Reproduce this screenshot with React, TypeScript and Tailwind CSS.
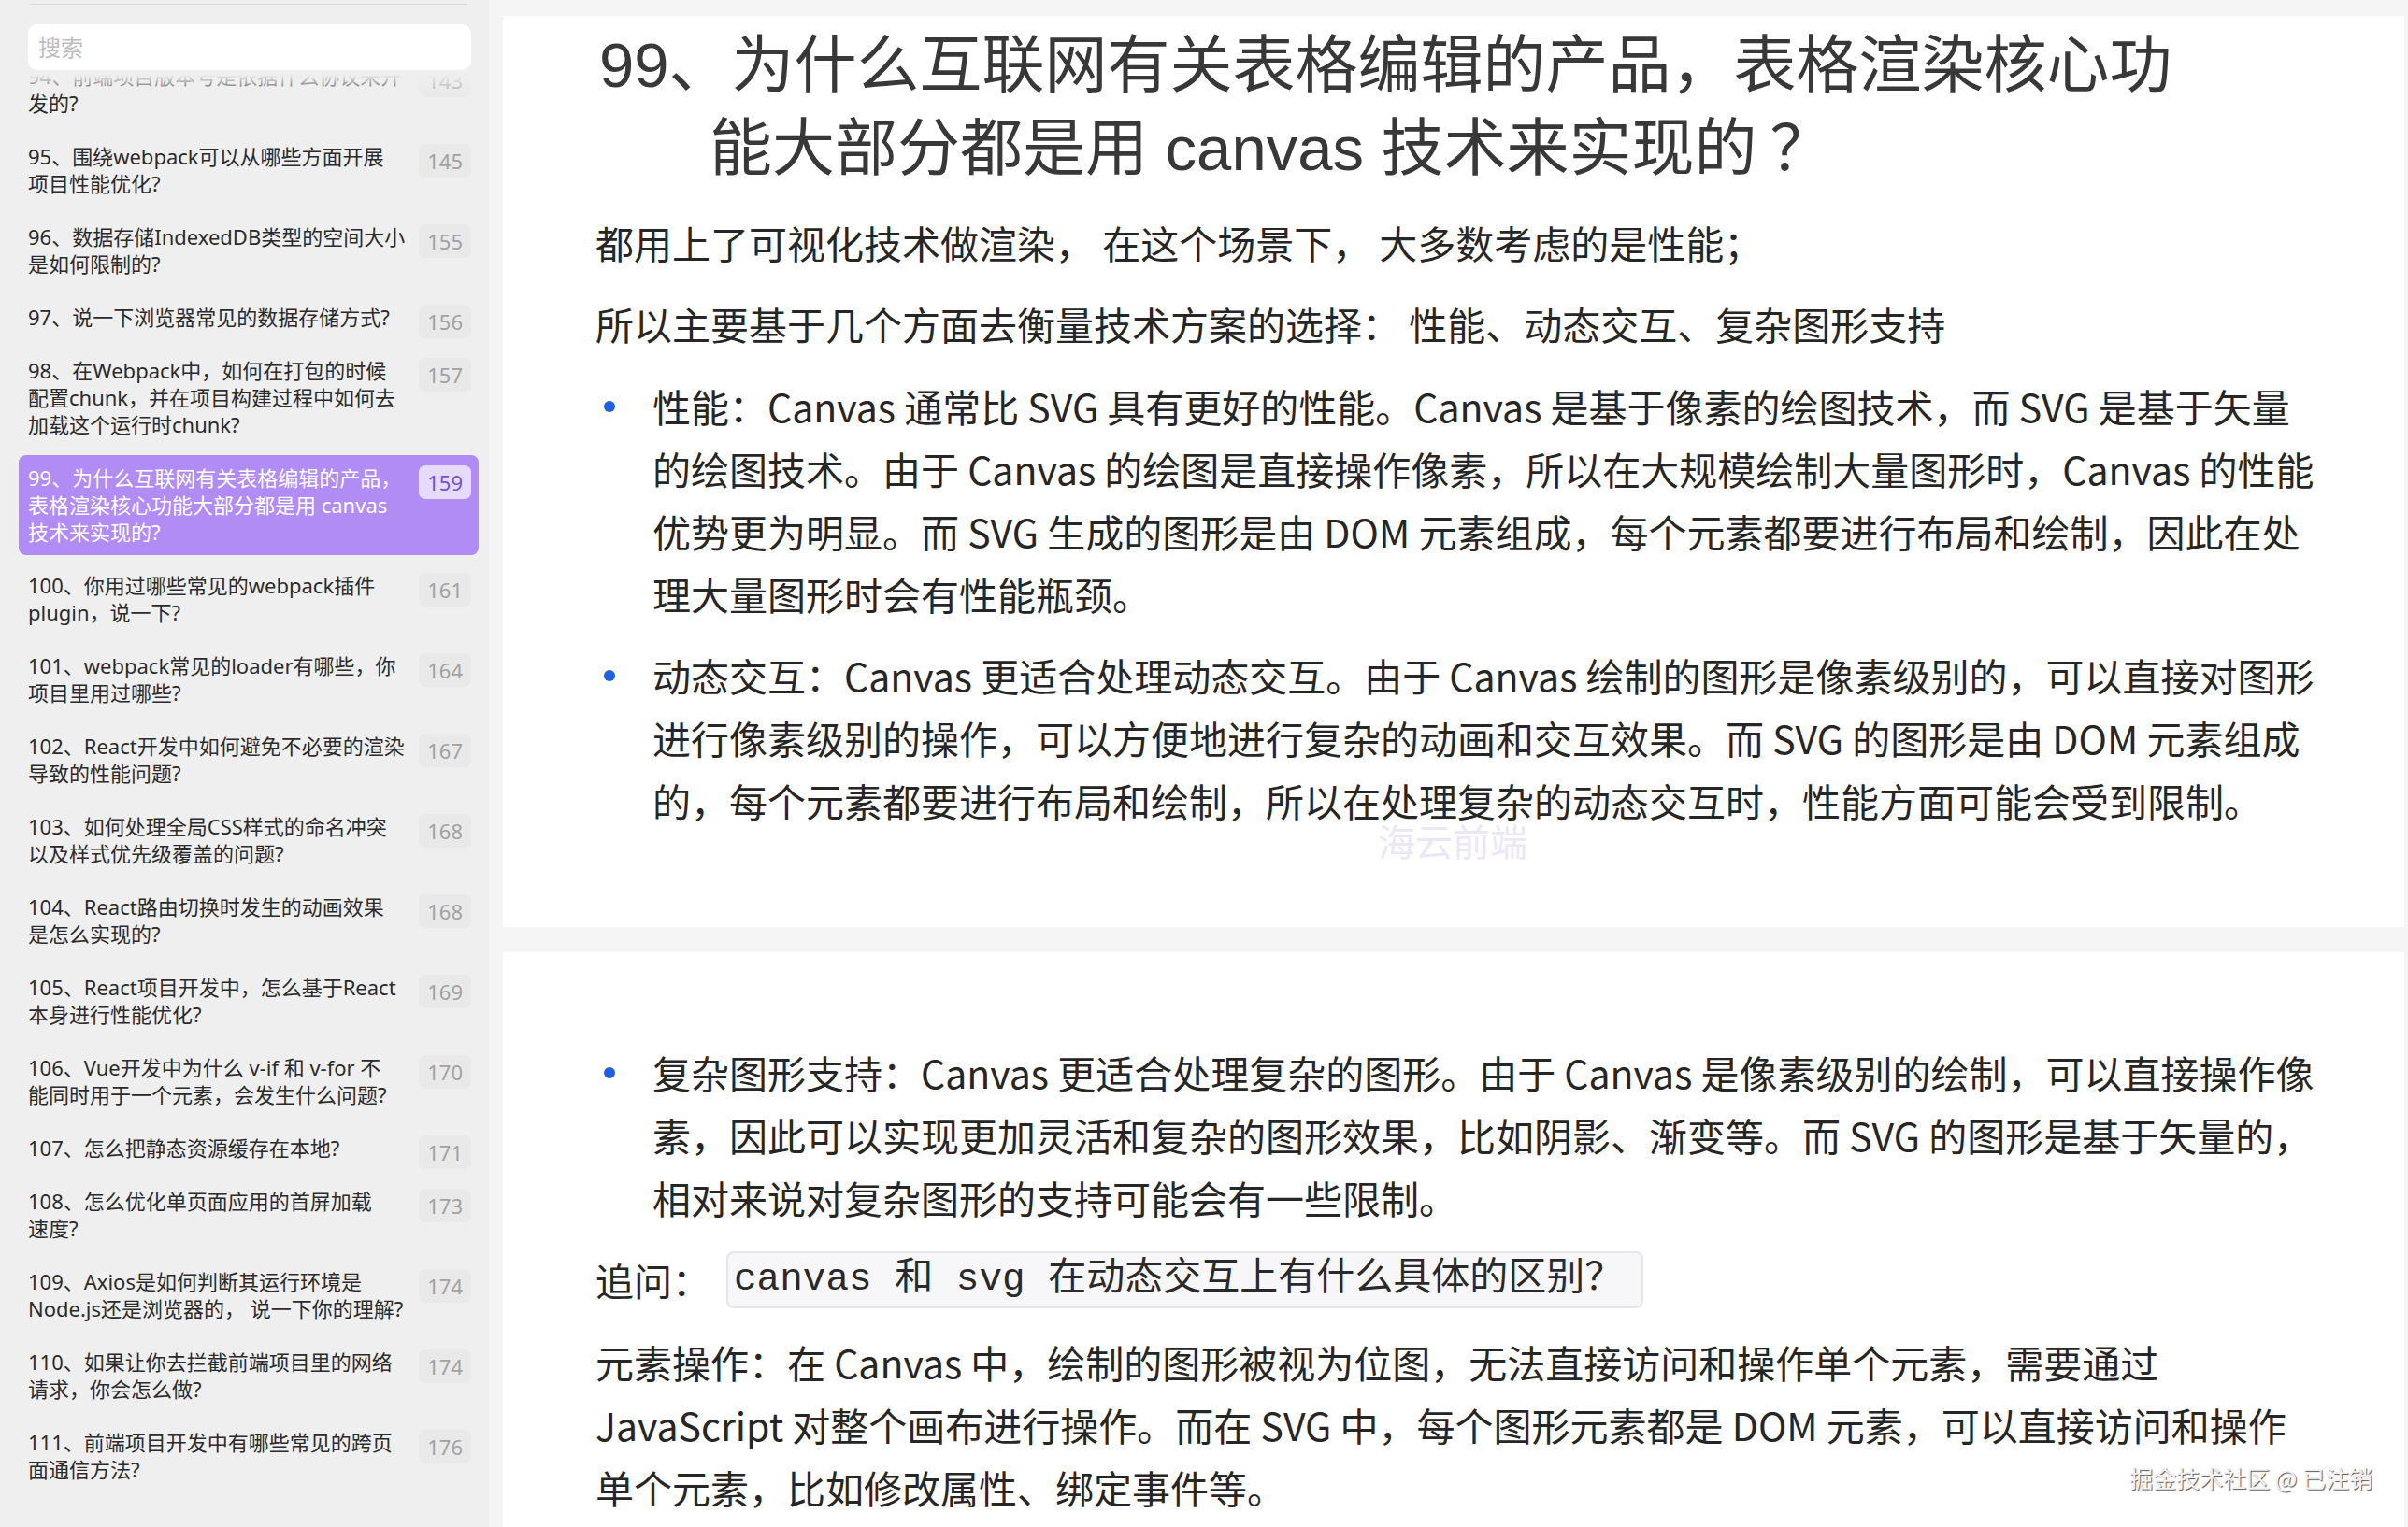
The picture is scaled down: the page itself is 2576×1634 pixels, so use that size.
import React from "react";

type Item = { lines: string[]; page: number; active?: boolean };

// table of contents, each entry broken into the lines it shows
const items: Item[] = [
  { lines: ["94、前端项目版本号是依据什么协议来开", "发的?"], page: 143 },
  { lines: ["95、围绕webpack可以从哪些方面开展", "项目性能优化?"], page: 145 },
  { lines: ["96、数据存储IndexedDB类型的空间大小", "是如何限制的?"], page: 155 },
  { lines: ["97、说一下浏览器常见的数据存储方式?"], page: 156 },
  {
    lines: ["98、在Webpack中，如何在打包的时候", "配置chunk，并在项目构建过程中如何去", "加载这个运行时chunk?"],
    page: 157,
  },
  {
    lines: ["99、为什么互联网有关表格编辑的产品，", "表格渲染核心功能大部分都是用 canvas", "技术来实现的?"],
    page: 159,
    active: true,
  },
  { lines: ["100、你用过哪些常见的webpack插件", "plugin，说一下?"], page: 161 },
  { lines: ["101、webpack常见的loader有哪些，你", "项目里用过哪些?"], page: 164 },
  { lines: ["102、React开发中如何避免不必要的渲染", "导致的性能问题?"], page: 167 },
  { lines: ["103、如何处理全局CSS样式的命名冲突", "以及样式优先级覆盖的问题?"], page: 168 },
  { lines: ["104、React路由切换时发生的动画效果", "是怎么实现的?"], page: 168 },
  { lines: ["105、React项目开发中，怎么基于React", "本身进行性能优化?"], page: 169 },
  { lines: ["106、Vue开发中为什么 v-if 和 v-for 不", "能同时用于一个元素，会发生什么问题?"], page: 170 },
  { lines: ["107、怎么把静态资源缓存在本地?"], page: 171 },
  { lines: ["108、怎么优化单页面应用的首屏加载", "速度?"], page: 173 },
  { lines: ["109、Axios是如何判断其运行环境是", "Node.js还是浏览器的， 说一下你的理解?"], page: 174 },
  { lines: ["110、如果让你去拦截前端项目里的网络", "请求，你会怎么做?"], page: 174 },
  { lines: ["111、前端项目开发中有哪些常见的跨页", "面通信方法?"], page: 176 },
];

const bullets1 = [
  [
    "性能：Canvas 通常比 SVG 具有更好的性能。Canvas 是基于像素的绘图技术，而 SVG 是基于矢量",
    "的绘图技术。由于 Canvas 的绘图是直接操作像素，所以在大规模绘制大量图形时，Canvas 的性能",
    "优势更为明显。而 SVG 生成的图形是由 DOM 元素组成，每个元素都要进行布局和绘制，因此在处",
    "理大量图形时会有性能瓶颈。",
  ],
  [
    "动态交互：Canvas 更适合处理动态交互。由于 Canvas 绘制的图形是像素级别的，可以直接对图形",
    "进行像素级别的操作，可以方便地进行复杂的动画和交互效果。而 SVG 的图形是由 DOM 元素组成",
    "的，每个元素都要进行布局和绘制，所以在处理复杂的动态交互时，性能方面可能会受到限制。",
  ],
];

const bullet3 = [
  "复杂图形支持：Canvas 更适合处理复杂的图形。由于 Canvas 是像素级别的绘制，可以直接操作像",
  "素，因此可以实现更加灵活和复杂的图形效果，比如阴影、渐变等。而 SVG 的图形是基于矢量的，",
  "相对来说对复杂图形的支持可能会有一些限制。",
];

const elementOps = [
  "元素操作：在 Canvas 中，绘制的图形被视为位图，无法直接访问和操作单个元素，需要通过",
  "JavaScript 对整个画布进行操作。而在 SVG 中，每个图形元素都是 DOM 元素，可以直接访问和操作",
  "单个元素，比如修改属性、绑定事件等。",
];

function Lines({ lines }: { lines: string[] }) {
  return (
    <>
      {lines.map((l, i) => (
        <div key={i}>{l}</div>
      ))}
    </>
  );
}

function Bullet({ lines }: { lines: string[] }) {
  return (
    <li className="flex">
      <div className="w-[61px] shrink-0">
        <div className="ml-[9px] mt-[28px] h-[12px] w-[12px] rounded-full bg-[#1f5fe6]" />
      </div>
      <div className="whitespace-nowrap">
        <Lines lines={lines} />
      </div>
    </li>
  );
}

function Sidebar() {
  return (
    <aside className="flex w-[523px] shrink-0 flex-col bg-[#efefef] font-['Noto_Sans','Noto_Sans_CJK_SC',sans-serif]">
      <div className="ml-[33px] mr-[23px] mt-[4px] h-px bg-[#dadada]" />
      <div className="ml-[30px] mr-[19px] mt-[21px] flex h-[49px] items-center rounded-[10px] bg-white px-[11px] text-[24px] text-[#bdbdbd]">
        搜索
      </div>
      <div className="relative mt-[5px] flex-1 overflow-hidden">
        <ul className="-mt-[23px] pl-[20px] pr-[11px]">
          {items.map((it) => (
            <li
              key={it.page + it.lines[0]}
              className={`mb-[8px] flex items-start rounded-[8px] py-[10px] pl-[10px] pr-[8px] ${
                it.active ? "bg-[#b18cf4] text-white" : "text-[#2b2b2b]"
              }`}
            >
              <div className="flex-1 whitespace-nowrap text-[22px] leading-[29px]">
                <Lines lines={it.lines} />
              </div>
              <span
                className={`-mb-[8px] mt-[1px] h-[36px] min-w-[53px] rounded-[7px] px-[9px] text-right text-[22px] leading-[36px] ${
                  it.active ? "bg-[#e6dafd] text-[#7254d2]" : "bg-[#e9e9e9] text-[#a2a2a2]"
                }`}
              >
                {it.page}
              </span>
            </li>
          ))}
        </ul>
        <div className="pointer-events-none absolute inset-x-0 top-0 h-[24px] bg-linear-to-b from-[#efefef] to-[#efefef]/0" />
      </div>
    </aside>
  );
}

export default function App() {
  return (
    <div className="relative flex h-[1634px] w-[2576px] overflow-hidden bg-[#f5f5f5]">
      <Sidebar />

      <main className="flex flex-1 flex-col gap-[27px] pl-[15px] pr-[4px] pt-[17px] text-[41px] leading-[67px] text-[#262626] font-['Noto_Sans_CJK_SC',sans-serif]">
        <section className="relative h-[975px] shrink-0 bg-white pl-[99px] pt-[8px]">
          <h1 className="whitespace-nowrap pl-[122px] indent-[-118px] text-[67px] font-normal leading-[89px] text-[#383838] font-['Liberation_Sans','Noto_Sans_CJK_SC',sans-serif]">
            99、为什么互联网有关表格编辑的产品，表格渲染核心功
            <br />
            能大部分都是用 canvas 技术来实现的<span className="ml-[14px]">？</span>
          </h1>
          <p className="mt-[23px] whitespace-nowrap">都用上了可视化技术做渲染， 在这个场景下， 大多数考虑的是性能；</p>
          <p className="mt-[20px] whitespace-nowrap">所以主要基于几个方面去衡量技术方案的选择： 性能、动态交互、复杂图形支持</p>
          <ul className="mt-[21px] flex flex-col gap-[20px]">
            {bullets1.map((b, i) => (
              <Bullet key={i} lines={b} />
            ))}
          </ul>
          <div className="pointer-events-none absolute left-[936px] top-[862px] text-[40px] leading-[40px] text-[#ebe7f6]">
            海云前端
          </div>
        </section>

        <section className="flex-1 bg-white pl-[99px] pt-[95px]">
          <ul>
            <Bullet lines={bullet3} />
          </ul>
          <div className="mt-[21px] flex items-center whitespace-nowrap">
            <span>追问：</span>
            <code className="ml-[17px] flex h-[61px] items-center rounded-[8px] border-2 border-[#e6e6ea] bg-[#f7f7f9] pl-[6px] pr-[20px] text-[41px] text-[#2a2a2a] font-['Liberation_Mono','Noto_Sans_CJK_SC',monospace]">
              canvas 和 svg 在动态交互上有什么具体的区别？
            </code>
          </div>
          <div className="mt-[21px] whitespace-nowrap">
            <Lines lines={elementOps} />
          </div>
        </section>
      </main>

      <div className="pointer-events-none absolute bottom-[38px] right-[38px] text-[25px] leading-[30px] text-[#f2f2f2] [text-shadow:1px_1px_1px_#555] font-['Noto_Sans_CJK_SC',sans-serif]">
        掘金技术社区 @ 已注销
      </div>
    </div>
  );
}
